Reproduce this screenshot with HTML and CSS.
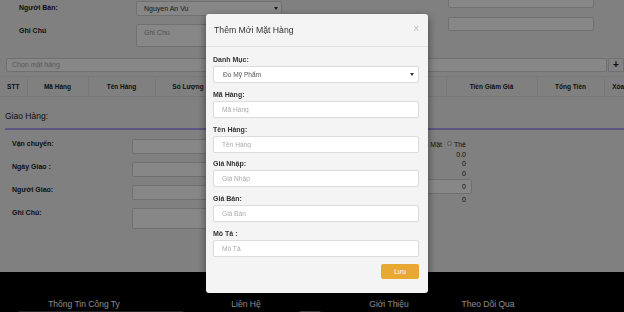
FILE: index.html
```html
<!DOCTYPE html>
<html lang="vi">
<head>
  <meta charset="UTF-8">
  <meta name="viewport" content="width=device-width, initial-scale=1.0">
  <title>Đơn Hàng - Thêm Mới Mặt Hàng</title>
  <link rel="stylesheet" href="styles.css">
</head>
<body>
  <div class="page">
    <!-- Order info -->
    <section class="order-info">
      <div class="info-left">
        <div class="info-row">
          <label class="info-label">Người Bán:</label>
          <div class="field select-field seller">
            <span>Nguyen An Vu</span>
            <span class="caret"></span>
          </div>
        </div>
        <div class="info-row">
          <label class="info-label">Ghi Chú</label>
          <div class="field textarea-field note">Ghi Chú</div>
        </div>
      </div>
      <div class="info-right">
        <div class="field side-input"></div>
        <div class="field side-input"></div>
      </div>
    </section>

    <div class="product-search">
      <div class="field search-input">Chọn mặt hàng</div>
      <button class="add-btn">+</button>
    </div>

    <table class="order-table">
      <colgroup>
        <col style="width: 27px"><col style="width: 61px"><col style="width: 67px">
        <col style="width: 66px"><col style="width: 75px"><col style="width: 75px">
        <col style="width: 75px"><col style="width: 91px"><col style="width: 67px">
        <col style="width: 28px">
      </colgroup>
      <thead>
        <tr>
          <th>STT</th>
          <th>Mã Hàng</th>
          <th>Tên Hàng</th>
          <th>Số Lượng</th>
          <th>Đơn Giá</th>
          <th>Thành Tiền</th>
          <th>Giảm Giá</th>
          <th>Tiền Giảm Giá</th>
          <th>Tổng Tiền</th>
          <th>Xóa</th>
        </tr>
      </thead>
    </table>

    <!-- Delivery -->
    <section class="delivery">
      <h3 class="section-title">Giao Hàng:</h3>
      <div class="delivery-body">
        <div class="delivery-form">
          <div class="delivery-row">
            <label class="info-label">Vận chuyển:</label>
            <div class="field delivery-input"></div>
          </div>
          <div class="delivery-row">
            <label class="info-label">Ngày Giao :</label>
            <div class="field delivery-input"></div>
          </div>
          <div class="delivery-row">
            <label class="info-label">Người Giao:</label>
            <div class="field delivery-input"></div>
          </div>
          <div class="delivery-row">
            <label class="info-label">Ghi Chú:</label>
            <div class="field delivery-input tall"></div>
          </div>
        </div>
        <div class="payment">
          <div class="pay-method">Hình Thức: <span class="radio checked"></span>Tiền Mặt <span class="radio"></span>Thẻ</div>
          <div class="pay-row"><span>Tổng Tiền Hàng:</span><span class="pay-value">0.0</span></div>
          <div class="pay-row"><span>Giảm Giá:</span><span class="pay-value">0</span></div>
          <div class="pay-row"><span>Phí Vận Chuyển:</span><span class="pay-value">0</span></div>
          <div class="pay-row"><span>Khách Trả:</span><span class="field pay-input">0</span></div>
          <div class="pay-row"><span>Tiền Thừa:</span><span class="pay-value">0</span></div>
        </div>
      </div>
    </section>
  </div>

  <footer class="site-footer">
    <div class="footer-col col-company">
      <h4>Thông Tin Công Ty</h4>
      <div class="footer-bar"></div>
    </div>
    <div class="footer-col col-contact">
      <h4>Liên Hệ</h4>
      <div class="footer-chip"></div>
    </div>
    <div class="footer-col col-about">
      <h4>Giới Thiệu</h4>
    </div>
    <div class="footer-col col-follow">
      <h4>Theo Dõi Qua</h4>
    </div>
  </footer>

  <!-- Modal -->
  <div class="backdrop"></div>
  <div class="modal">
    <div class="modal-dialog">
      <div class="modal-header">
        <h4 class="modal-title">Thêm Mới Mặt Hàng</h4>
        <button class="close">&times;</button>
      </div>
      <div class="modal-body">
        <div class="form-group">
          <label>Danh Mục:</label>
          <div class="form-control form-select">
            <span>Đồ Mỹ Phẩm</span>
            <span class="caret"></span>
          </div>
        </div>
        <div class="form-group">
          <label>Mã Hàng:</label>
          <input class="form-control" type="text" placeholder="Mã Hàng">
        </div>
        <div class="form-group">
          <label>Tên Hàng:</label>
          <input class="form-control" type="text" placeholder="Tên Hàng">
        </div>
        <div class="form-group">
          <label>Giá Nhập:</label>
          <input class="form-control" type="text" placeholder="Giá Nhập">
        </div>
        <div class="form-group">
          <label>Giá Bán:</label>
          <input class="form-control" type="text" placeholder="Giá Bán">
        </div>
        <div class="form-group">
          <label>Mô Tả :</label>
          <input class="form-control" type="text" placeholder="Mô Tả">
        </div>
        <div class="modal-actions">
          <button class="btn-save">Lưu</button>
        </div>
      </div>
    </div>
  </div>
</body>
</html>
```

FILE: styles.css
```css
* {
  box-sizing: border-box;
}
html, body {
  margin: 0;
}
body {
  width: 624px;
  height: 312px;
  overflow: hidden;
  font-family: "Liberation Sans", Arial, sans-serif;
  font-size: 7px;
  color: #333;
  background-color: #f2f2f2;
}
.page {
  height: 272px;
  overflow: hidden;
}
.field {
  background-color: #fff;
  border: 1px solid #d4d4d4;
  border-radius: 2px;
}
.info-label {
  display: block;
  font-weight: bold;
  line-height: 10px;
  color: #222;
}

/* order info */
.order-info {
  display: flex;
  padding-top: 1px;
  height: 58px;
}
.info-left {
  width: 282px;
  padding-left: 19px;
  display: flex;
  flex-direction: column;
  gap: 8px;
}
.info-row {
  display: flex;
}
.info-row .info-label {
  width: 117px;
  flex-shrink: 0;
  padding-top: 2px;
}
.select-field {
  display: flex;
  align-items: center;
  justify-content: space-between;
  padding: 0 3px 0 7px;
}
.seller {
  width: 146px;
  height: 15px;
}
.caret {
  width: 0;
  height: 0;
  border-left: 2px solid transparent;
  border-right: 2px solid transparent;
  border-top: 3px solid #333;
}
.note {
  width: 146px;
  height: 23px;
  padding: 4px 7px;
  color: #999;
}
.info-right {
  margin-left: 166px;
  margin-top: -7px;
  display: flex;
  flex-direction: column;
  gap: 9px;
}
.side-input {
  width: 146px;
  height: 14px;
}

/* product search */
.product-search {
  display: flex;
  gap: 1px;
  padding-left: 6px;
  height: 14px;
}
.search-input {
  width: 601px;
  padding: 0 5px;
  line-height: 12px;
  color: #aaa;
}
.add-btn {
  width: 16px;
  padding: 0;
  border: 1px solid #d4d4d4;
  background-color: #f6f6f6;
  font-family: inherit;
  font-size: 10px;
  font-weight: bold;
  line-height: 10px;
  color: #222;
}

/* table */
.order-table {
  margin-top: 4px;
  width: 632px;
  table-layout: fixed;
  border-collapse: collapse;
}
.order-table th {
  height: 20px;
  padding: 0;
  font-size: 6.5px;
  font-weight: bold;
  text-align: center;
  white-space: nowrap;
  color: #222;
  border-top: 1px solid #e2e2e2;
  border-bottom: 1px solid #e2e2e2;
  border-left: 1px solid #e2e2e2;
}
.order-table th:first-child {
  border-left: none;
}

/* delivery */
.delivery {
  margin-top: 14px;
  padding-left: 5px;
}
.section-title {
  margin: 0;
  font-size: 8.5px;
  font-weight: normal;
  line-height: 10px;
  padding-bottom: 7px;
  border-bottom: 2px solid #b0a2f6;
  color: #222;
}
.delivery-body {
  display: flex;
  padding-top: 9px;
}
.delivery-form {
  width: 300px;
  padding-left: 7px;
  display: flex;
  flex-direction: column;
  gap: 8px;
}
.delivery-row {
  display: flex;
}
.delivery-row .info-label {
  width: 120px;
}
.delivery-input {
  width: 170px;
  height: 15px;
}
.delivery-input.tall {
  height: 21px;
}
.payment {
  width: 150px;
  margin-left: 17px;
  margin-top: 1px;
  line-height: 9.5px;
  color: #222;
}
.pay-method {
  text-align: right;
  padding-right: 6px;
  white-space: nowrap;
}
.radio {
  display: inline-block;
  width: 5px;
  height: 5px;
  margin: 0 2px 0 3px;
  border: 1px solid #aaa;
  border-radius: 50%;
  background-color: #fff;
  vertical-align: 1px;
}
.radio.checked {
  background-color: #333;
}
.pay-row {
  display: grid;
  grid-template-columns: 98px 52px;
}
.pay-value {
  text-align: right;
  padding-right: 6px;
}
.pay-input {
  margin: 1px 0 1px;
  height: 15px;
  line-height: 13px;
  text-align: right;
  padding-right: 5px;
}

/* footer */
.site-footer {
  display: flex;
  height: 40px;
  padding-top: 27px;
  background-color: #000;
  color: #fff;
}
.footer-col h4 {
  margin: 0;
  font-size: 8.5px;
  font-weight: normal;
  line-height: 10px;
  text-align: center;
}
.col-company { width: 168px; }
.col-contact { width: 156px; }
.col-about { width: 130px; }
.col-follow { width: 68px; }
.footer-bar {
  width: 164px;
  height: 3px;
  margin: 2px 0 0 19px;
  background-color: #444;
}
.footer-chip {
  width: 22px;
  height: 4px;
  margin: 2px 0 0 131px;
  border-radius: 2px;
  background-color: #666;
}

/* modal */
.backdrop {
  position: fixed;
  top: 0;
  left: 0;
  width: 100%;
  height: 100%;
  background-color: rgba(0, 0, 0, 0.47);
}
.modal {
  position: fixed;
  top: 0;
  left: 0;
  width: 100%;
  height: 100%;
}
.modal-dialog {
  width: 222px;
  margin: 14px 0 0 206px;
  background-color: #f4f4f4;
  border-radius: 3px;
  box-shadow: 0 3px 9px rgba(0, 0, 0, 0.5);
}
.modal-header {
  display: flex;
  justify-content: space-between;
  padding: 11px 9px 10px 8px;
  border-bottom: 1px solid #e3e3e3;
}
.modal-title {
  margin: 0;
  font-size: 8.7px;
  font-weight: normal;
  line-height: 11px;
  color: #333;
}
.close {
  margin-top: -4px;
  padding: 0;
  border: none;
  background: none;
  font-family: inherit;
  font-size: 10px;
  line-height: 10px;
  color: #bbb;
}
.modal-body {
  padding: 8px 9px 14px 7px;
}
.form-group {
  margin-bottom: 6.8px;
}
.form-group label {
  display: block;
  font-weight: bold;
  line-height: 10px;
  margin-bottom: 1px;
  color: #333;
}
.form-control {
  display: block;
  width: 100%;
  height: 17px;
  padding: 0 8px;
  background-color: #fff;
  border: 1px solid #dcdcdc;
  border-radius: 2px;
  font-family: inherit;
  font-size: 6.6px;
  color: #555;
  outline: none;
}
.form-control::placeholder {
  color: #aaa;
}
.form-select {
  display: flex;
  align-items: center;
  justify-content: space-between;
  padding: 0 4px 0 9px;
}
.modal-actions {
  display: flex;
  justify-content: flex-end;
}
.btn-save {
  width: 38px;
  height: 15px;
  padding: 0;
  border: none;
  border-radius: 2px;
  background-color: #e8a934;
  font-family: inherit;
  font-size: 6.5px;
  color: #fff;
}
```
